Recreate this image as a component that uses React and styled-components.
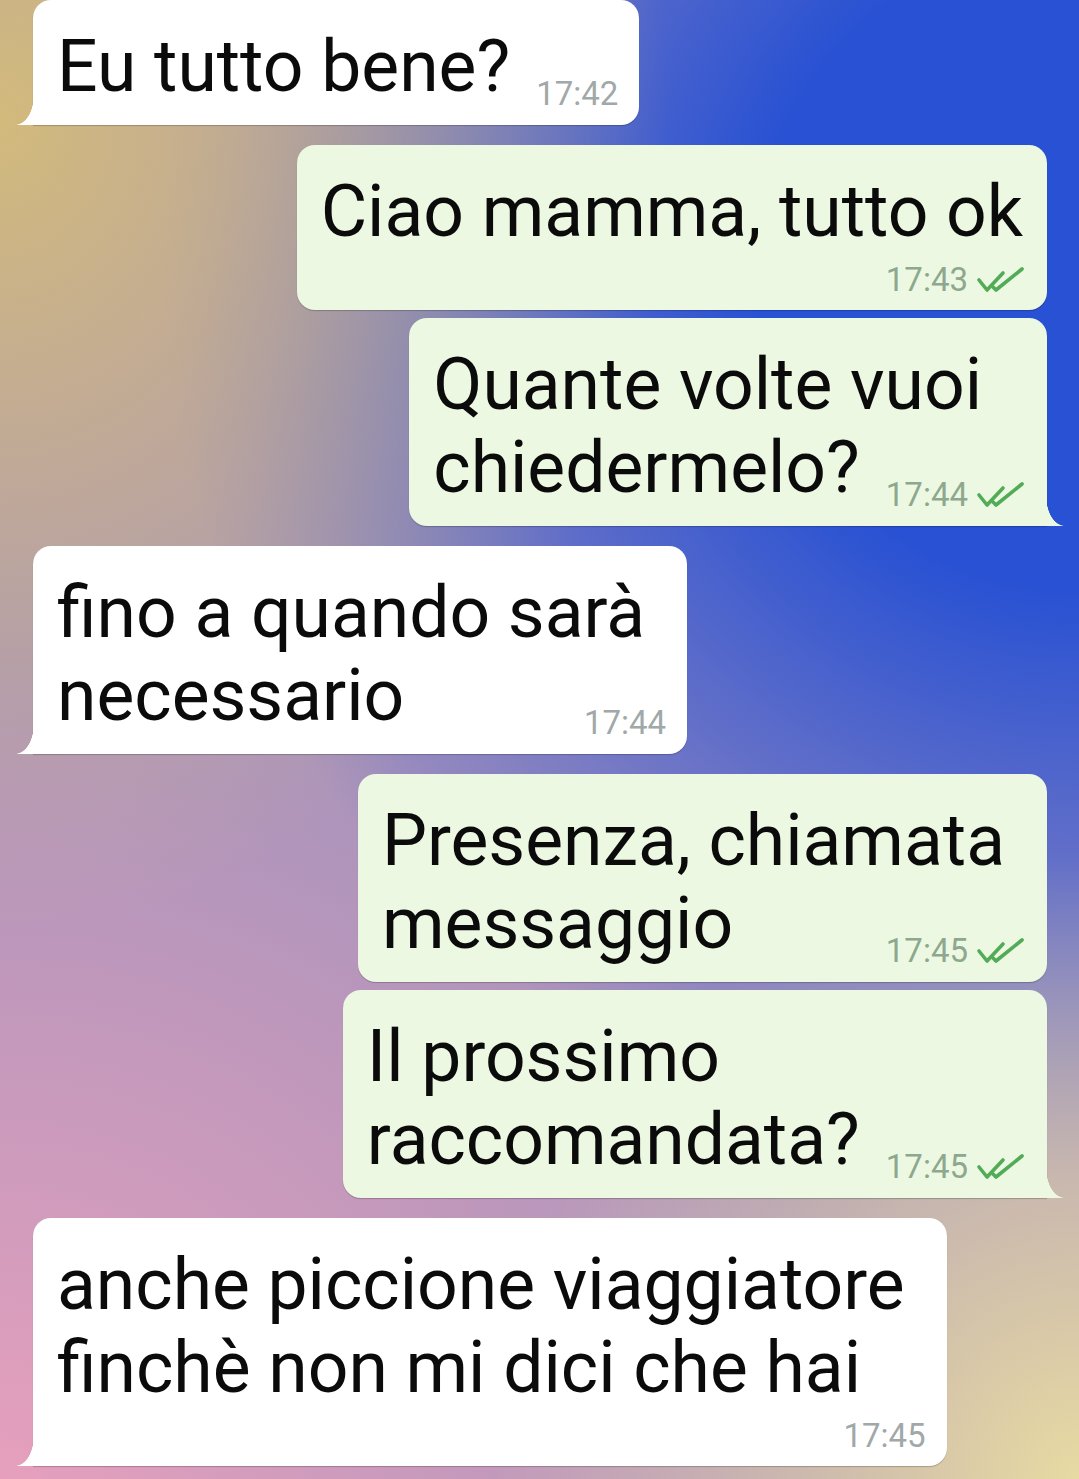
import styled, { createGlobalStyle, css } from "styled-components";

const GlobalStyle = createGlobalStyle`
  html, body {
    margin: 0;
    padding: 0;
  }
  body {
    width: 1079px;
    height: 1479px;
    overflow: hidden;
    font-family: Roboto, "Noto Sans", "Liberation Sans", sans-serif;
  }
`;

const messages = [
  { from: "in", lines: ["Eu tutto bene?"], time: "17:42", tail: true },
  { from: "out", lines: ["Ciao mamma, tutto ok"], time: "17:43", own: true },
  { from: "out", lines: ["Quante volte vuoi", "chiedermelo?"], time: "17:44", tail: true },
  { from: "in", lines: ["fino a quando sarà", "necessario"], time: "17:44", tail: true, trail: true },
  { from: "out", lines: ["Presenza, chiamata", "messaggio"], time: "17:45", trail: true },
  { from: "out", lines: ["Il prossimo", "raccomandata?"], time: "17:45", tail: true },
  {
    from: "in",
    lines: ["anche piccione viaggiatore", "finchè non mi dici che hai"],
    time: "17:45",
    tail: true,
    trail: true,
    own: true,
  },
];

const Checks = () => (
  <svg width="50" height="28" viewBox="0 0 50 28" fill="none">
    <path
      d="M3 14 L11 24 L27 7"
      stroke="#52ab57"
      strokeWidth="3.6"
      strokeLinecap="round"
      strokeLinejoin="round"
    />
    <path
      d="M17 21 L20 24 L46 3"
      stroke="#52ab57"
      strokeWidth="3.6"
      strokeLinecap="round"
      strokeLinejoin="round"
    />
  </svg>
);

const Message = ({ from, lines, time, tail, trail, own, same }) => {
  const out = from === "out";
  const meta = (
    <Meta $out={out}>
      <Time $out={out}>{time}</Time>
      {out && <Checks />}
    </Meta>
  );

  return (
    <Row $out={out} $same={same}>
      <Bubble $out={out} $tail={tail}>
        {lines.map((line, i) => {
          const last = i === lines.length - 1;
          return (
            <Line key={i} $trail={trail && i === 0}>
              {line}
              {last && !own && meta}
            </Line>
          );
        })}
        {own && <MetaRow>{meta}</MetaRow>}
      </Bubble>
    </Row>
  );
};

const App = () => {
  return (
    <Screen>
      <GlobalStyle />
      <Chat>
        {messages.map((m, i) => (
          <Message
            key={i}
            {...m}
            same={i > 0 && messages[i - 1].from === m.from}
          />
        ))}
      </Chat>
    </Screen>
  );
};

const Screen = styled.div`
  width: 1079px;
  height: 1479px;
  overflow: hidden;
  background:
    radial-gradient(ellipse 55% 42% at 100% 100%, #e8daa2 0%, rgba(232, 218, 162, 0) 100%),
    radial-gradient(ellipse 80% 55% at 0% 100%, #e6a0bd 0%, rgba(230, 160, 189, 0) 100%),
    radial-gradient(ellipse 62% 55% at 0% 8%, #d2ba7c 0%, rgba(210, 186, 124, 0) 100%),
    radial-gradient(ellipse 85% 62% at 100% 18%, #2851d3 35%, rgba(40, 81, 211, 0) 100%),
    #a893bb;
`;

const Chat = styled.div`
  display: flex;
  flex-direction: column;
  padding: 0 32px 0 33px;
`;

const Row = styled.div`
  display: flex;
  justify-content: ${({ $out }) => ($out ? "flex-end" : "flex-start")};
  margin-top: ${({ $same }) => ($same ? "8px" : "20px")};

  &:first-child {
    margin-top: 0;
  }
`;

const tailIn = css`
  border-bottom-left-radius: 0;

  &::before {
    content: "";
    position: absolute;
    left: -17px;
    bottom: 0;
    width: 18px;
    height: 30px;
    background: radial-gradient(
      ellipse 18px 30px at 0 0,
      rgba(255, 255, 255, 0) 97%,
      #ffffff 100%
    );
    border-bottom-left-radius: 3px;
  }
`;

const tailOut = css`
  border-bottom-right-radius: 0;

  &::before {
    content: "";
    position: absolute;
    right: -17px;
    bottom: 0;
    width: 18px;
    height: 30px;
    background: radial-gradient(
      ellipse 18px 30px at 100% 0,
      rgba(236, 248, 226, 0) 97%,
      #ecf8e2 100%
    );
    border-bottom-right-radius: 3px;
  }
`;

const Bubble = styled.div`
  position: relative;
  display: flex;
  flex-direction: column;
  padding: 25px 24px 17px 24px;
  border-radius: 18px;
  background: ${({ $out }) => ($out ? "#ecf8e2" : "#ffffff")};
  box-shadow: 0 1px 1px rgba(0, 0, 0, 0.22);
  color: #0b0b0b;
  font-size: 71.4px;
  line-height: 83px;

  ${({ $tail, $out }) => $tail && ($out ? tailOut : tailIn)}
`;

const Line = styled.div`
  display: flex;
  align-items: flex-start;
  white-space: nowrap;
  padding-right: ${({ $trail }) => ($trail ? "18px" : "0")};
`;

const Meta = styled.span`
  display: inline-flex;
  align-items: center;
  gap: 8px;
  margin-left: auto;
  margin-right: -3px;
  padding-left: 26px;
  align-self: flex-end;
  margin-bottom: -6px;
  height: 40px;
`;

const MetaRow = styled.div`
  display: flex;
  justify-content: flex-end;
  margin-top: 7px;
  margin-bottom: -7px;

  ${Meta} {
    margin-bottom: 0;
  }
`;

const Time = styled.span`
  font-size: 33px;
  line-height: 40px;
  color: ${({ $out }) => ($out ? "#8da88e" : "#a0a8a8")};
`;

export default App;
